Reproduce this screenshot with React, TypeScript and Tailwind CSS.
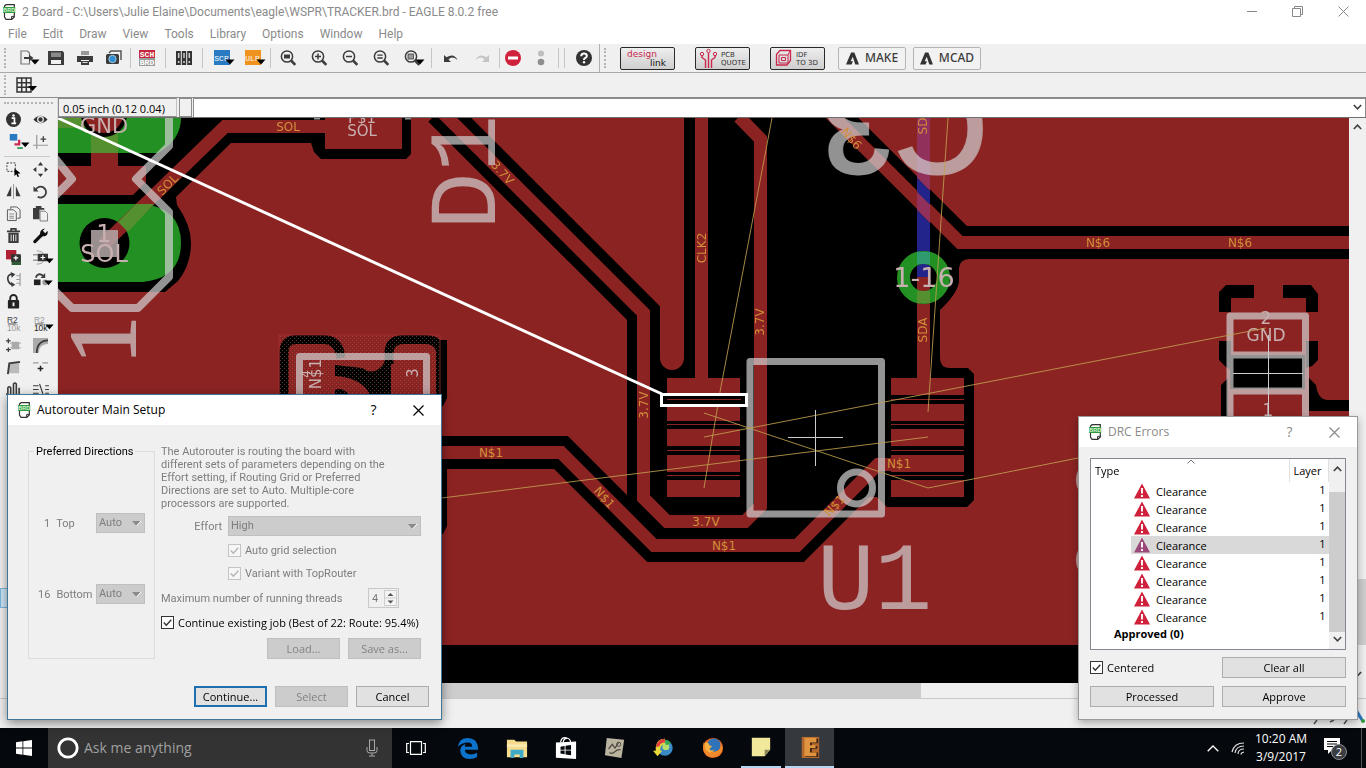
import React, { useState } from 'react';

type IconProps = { children: React.ReactNode; size?: number };

const Glyph = ({ children, size = 16 }: IconProps) => (
  <svg width={size} height={size} viewBox="0 0 16 16" fill="none" className="block shrink-0">
    {children}
  </svg>
);

const DARK = '#3c3c3c';
const GRAY = '#9a9a9a';

const BoardIcon = () => (
  <svg width="13" height="16" viewBox="0 0 13 16" className="block shrink-0">
    <path d="M3 .7h8.300v12.300l-2.500 2.300H3L1.500 13V2z" fill="#fff" stroke="#333" strokeWidth="1.200" />
    <rect x=".2" y="3" width="12" height="6" fill="#2f9a3c" />
    <text x="6.200" y="8.200" fontSize="5.500" fontWeight="700" textAnchor="middle" fill="#d8f5d8" fontFamily="Liberation Sans, sans-serif">BRD</text>
    <path d="M8.600 15v-2.600h2.700" fill="none" stroke="#333" />
  </svg>
);

const Lens = ({ children }: { children: React.ReactNode }) => (
  <>
    <circle cx="7" cy="6.500" r="5.600" stroke={DARK} strokeWidth="1.500" />
    <path d="M11 10.500l4.300 4.300" stroke={DARK} strokeWidth="2.600" />
    {children}
  </>
);

const toolbarIcons: Record<string, React.ReactNode> = {
  open: (
    <>
      <path d="M10.500 5V3L8.500 1H2v13h8.500v-3" stroke="#777" strokeWidth="1.200" />
      <path d="M5 7h5V4.500L14.500 8 10 11.500V9H5z" fill={DARK} />
    </>
  ),
  save: (
    <>
      <path d="M0 1h14.500L16 2.500V15H0z" fill={DARK} />
      <rect x="3" y="2.500" width="10" height="4.500" fill="#8a8a8a" />
      <rect x="3" y="10" width="10" height="4" fill="#f0f0f0" />
    </>
  ),
  print: (
    <>
      <rect x="4" y="1" width="8" height="4" fill={GRAY} />
      <path d="M0 6h16v6h-4v-2H4v2H0z" fill={DARK} />
      <path d="M4 11h8v4H4z" fill={DARK} />
      <path d="M5.500 12.500h5" stroke="#ddd" />
    </>
  ),
  camera: (
    <>
      <path d="M3 3l2-2h10v9" stroke="#555" strokeWidth="1.500" />
      <rect x="0" y="4" width="13" height="10" rx="1.500" fill={DARK} />
      <circle cx="6.500" cy="9" r="3.700" fill="#2f8fd0" stroke="#cfe6f7" strokeWidth=".7" />
    </>
  ),
  sch: (
    <>
      <rect x="0" y="0" width="16" height="8" fill="#c4283c" />
      <rect x="0" y="8" width="16" height="8" fill="#9c9c9c" />
      <text x="8" y="6.900" fontSize="8" fontWeight="700" fill="#fff" textAnchor="middle" fontFamily="Liberation Mono, monospace">SCH</text>
      <text x="8" y="14.800" fontSize="8" fontWeight="700" fill="#fff" textAnchor="middle" fontFamily="Liberation Mono, monospace">BRD</text>
    </>
  ),
  library: (
    <>
      <rect x="0" y="1" width="16" height="14" fill="#333" />
      <path d="M5.300 1v14M10.700 1v14" stroke="#f0f0f0" />
      <path d="M2.700 3v5M8 3v5M13.300 3v5M2.700 11v2M8 11v2M13.300 11v2" stroke="#ccc" strokeWidth="1.500" />
    </>
  ),
  scr: (
    <>
      <rect x="0" y="0" width="16" height="15" fill="#2a7ac2" />
      <text x="7.500" y="10.500" fontSize="8" fill="#fff" textAnchor="middle" fontFamily="Liberation Mono, monospace">SCR</text>
    </>
  ),
  ulp: (
    <>
      <rect x="0" y="0" width="16" height="15" fill="#f0921e" />
      <text x="7.500" y="10.500" fontSize="8" fill="#fff" textAnchor="middle" fontFamily="Liberation Mono, monospace">ULP</text>
    </>
  ),
  zoomFit: <Lens><rect x="4" y="4.500" width="6" height="4" fill={DARK} /></Lens>,
  zoomIn: <Lens><path d="M4 6.500h6M7 3.500v6" stroke={DARK} strokeWidth="1.500" /></Lens>,
  zoomOut: <Lens><path d="M4 6.500h6" stroke={DARK} strokeWidth="1.500" /></Lens>,
  zoomRedraw: <Lens><path d="M4.300 5.200h5.400M4.300 8h5.400" stroke={DARK} strokeWidth="1.300" /></Lens>,
  zoomSelect: <Lens><rect x="4" y="4" width="5.500" height="5" fill={GRAY} stroke={DARK} strokeWidth=".8" /></Lens>,
  undo: <path d="M1 5v7h7L5.500 9.500Q9 5.500 14.500 10 11 2.500 3.500 7.300z" fill={DARK} />,
  redo: <path d="M15 5v7H8l2.500-2.500Q7 5.500 1.500 10 5 2.500 12.500 7.300z" fill="#c4c4c4" />,
  stop: (
    <>
      <circle cx="8" cy="8" r="8" fill="#d0213c" />
      <rect x="3" y="6.500" width="10" height="3" fill="#fff" />
    </>
  ),
  go: (
    <>
      <circle cx="8" cy="3.500" r="3" fill="#bdbdbd" />
      <circle cx="8" cy="12" r="3.300" fill="#8e8e8e" />
    </>
  ),
  help: (
    <>
      <circle cx="8" cy="8" r="8" fill="#333" />
      <path d="M5.200 6.200Q5.300 3.600 8 3.600t2.800 2.300Q10.800 7.300 9 8.200 8 8.800 8 10" stroke="#fff" strokeWidth="2" />
      <circle cx="8" cy="12.300" r="1.200" fill="#fff" />
    </>
  ),
};

type Tool = { id: string; label: string; drop?: boolean };

const ToolButton = ({ id, label, drop, width = 'w-[31px]' }: Tool & { width?: string }) => (
  <button type="button" aria-label={label} title={label} className={`flex h-6 ${width} items-center justify-center`}>
    <svg width="16" height="16" viewBox="0 0 16 16" fill="none" className="overflow-visible">
      {toolbarIcons[id]}
      {drop && <path d="M11.500 9.500h9l-4.500 5z" fill="#000" />}
    </svg>
  </button>
);

const Sep = ({ wide = false }) => (
  <span className={`flex h-5 shrink-0 justify-center ${wide ? 'w-2' : 'w-1'}`}>
    <span className="w-px bg-[#c6c6c6]" />
  </span>
);

const Grip = () => <span className="ml-1 h-5 w-2 shrink-0 border-l-2 border-dotted border-[#b4b4b4]" />;

const paletteIcons: [string, React.ReactNode][] = [
  ['Info', <><circle cx="8" cy="8" r="8" fill="#333" /><path d="M6 6.500h3V12M5.800 12.200h5" stroke="#fff" strokeWidth="1.800" /><circle cx="8" cy="3.800" r="1.300" fill="#fff" /></>],
  ['Show', <><path d="M.5 8Q8 0 15.500 8 8 16 .5 8z" fill="#333" /><circle cx="8" cy="8" r="3" fill="#333" stroke="#f0f0f0" strokeWidth="1.300" /></>],
  ['Layer settings', <><rect x="4" y="0" width="8" height="7" fill="#2a7ac2" /><path d="M14 6v5H9" stroke="#cc2850" strokeWidth="2.500" /><path d="M12 15h6" stroke="#39a060" strokeWidth="2" /><path d="M16 9h9l-4.500 5z" fill="#000" /></>],
  ['Mark', <><path d="M4 1v15M0 12h16" stroke={GRAY} strokeWidth="1.300" /><path d="M8 5.500h6M11 2.500v6" stroke="#444" strokeWidth="1.500" /></>],
  ['Group', <><rect x="1" y="1" width="9" height="9" stroke="#333" strokeDasharray="2 1.500" /><path d="M9 7l6.500 5-3 .5 1.500 3-1.500.5-1.500-3-2 2z" fill="#000" /></>],
  ['Move', <path d="M8 0l2.800 3.600H5.200zM8 16l2.800-3.600H5.200zM0 8l3.600-2.800v5.600zM16 8l-3.600-2.800v5.600z" fill="#333" />],
  ['Mirror', <><path d="M5.500 2v11H.5z" fill={DARK} /><path d="M10.500 2v11h5z" fill={DARK} /><path d="M8 0v16" stroke={GRAY} /></>],
  ['Rotate', <><path d="M3 6A5.800 5.800 0 1 1 5 13.500" stroke={DARK} strokeWidth="1.900" /><path d="M.5 2.500v5.500h5.500z" fill={DARK} /></>],
  ['Copy', <><path d="M5 3V1h6.500L15 4v9h-3" stroke="#555" /><path d="M1.500 4H8l3 3v8.500H1.500z" stroke="#555" fill="#f0f0f0" /><path d="M3.500 8.500h5M3.500 11h5M3.500 13h5" stroke="#888" /></>],
  ['Paste', <><path d="M0 2h3V0h6v2h3v2H7v10H0z" fill={DARK} /><path d="M7.500 5.500H13l2.500 2.500v8h-8z" fill="#f0f0f0" stroke="#777" /></>],
  ['Delete', <><path d="M1 3.500h14M5.500 3V1h5v2" stroke={DARK} strokeWidth="1.800" /><path d="M2.500 5h11v11h-11z" fill={DARK} /><path d="M5.500 7v7M8 7v7M10.500 7v7" stroke="#eee" /></>],
  ['Properties', <><path d="M2 14.500L9 7.500" stroke="#111" strokeWidth="3.500" strokeLinecap="round" /><path d="M13 .5L10.500 3l2.500 2.500L15.500 3q1 4.500-3 5.800-4.500.7-5-3.300Q8 1 13 .5z" fill="#111" /></>],
  ['Add part', <><rect x="0" y="0" width="11" height="10" fill="#b02035" /><rect x="6" y="5" width="10" height="11" fill="#2f5a35" /><rect x="5.500" y="4.500" width="10" height="8" fill="#333" /><path d="M8 8.500h5M10.500 6v5" stroke="#fff" strokeWidth="1.300" /></>],
  ['Replace', <><path d="M0 5h5M0 11h5" stroke={GRAY} strokeWidth="1.500" /><path d="M4 1q6 0 7 3v8q-1 3-7 3" stroke={GRAY} /><rect x="5" y="4" width="11" height="8" fill="#333" /><path d="M8 8h5M10.500 5.500v5" stroke="#fff" strokeWidth="1.300" /><path d="M13 9h9l-4.500 5z" fill="#000" /></>],
  ['Pin swap', <><path d="M7 2Q1 3 2 8t5 5.500" stroke={DARK} strokeWidth="1.800" /><path d="M5 0l5 2.500L6 6zM5 10.500l5 3L6 16z" fill={DARK} /><path d="M15 1v14M11 4h4M11 8h4M11 12h4" stroke={GRAY} strokeWidth="1.200" /></>],
  ['Gate swap', <><path d="M3 6Q5 0 11 4" stroke={DARK} strokeWidth="2" /><path d="M13 1v5.500H8z" fill={DARK} /><rect x="1" y="8" width="7" height="6" fill="#222" /><circle cx="13" cy="11" r="3" fill={GRAY} /><path d="M12 9h9l-4.500 5z" fill="#000" /></>],
  ['Lock', <><path d="M4.500 7V4.500a3.500 3.500 0 0 1 7 0V7" stroke="#222" strokeWidth="2" /><rect x="2" y="6.500" width="12" height="9" rx="1" fill="#222" /><path d="M8 9v4" stroke="#f0f0f0" strokeWidth="2" /></>],
  ['', null],
  ['Name', <><text x="1" y="7" fontSize="9" fill="#444" fontFamily="Liberation Sans, sans-serif">R2</text><path d="M2 8.500h9" stroke="#444" /><text x="1" y="16" fontSize="9" fill="#999" fontFamily="Liberation Sans, sans-serif">10k</text></>],
  ['Value', <><text x="1" y="7" fontSize="9" fill="#999" fontFamily="Liberation Sans, sans-serif">R2</text><path d="M2 8.500h9" stroke="#444" /><text x="1" y="16" fontSize="9" fill="#222" fontFamily="Liberation Sans, sans-serif">10k</text><path d="M13 9h9l-4.500 5z" fill="#000" /></>],
  ['Smash', <><path d="M0 3h5M2.500.5v5M0 12.500h5M2.500 10v5" stroke={DARK} strokeWidth="1.300" /><rect x="6" y="4" width="8" height="8" fill="#aaa" /><path d="M4 5.500h12M4 10.500h12" stroke="#aaa" /></>],
  ['Miter', <><path d="M0 0h16v6Q6 7 6 16H0z" fill="#aaa" /><path d="M4 16Q4 3 16 2.500" stroke={DARK} strokeWidth="1.800" /></>],
  ['Split', <><path d="M3.500 3.500L14 2v12H3z" fill="#bbb" /><path d="M2 15L3.500 3.500 15 2" stroke={DARK} strokeWidth="2" /></>],
  ['Optimize', <><path d="M0 3h6M10 3h6" stroke={GRAY} strokeWidth="1.300" /><path d="M5 9h6M8 6v6" stroke="#222" strokeWidth="1.600" /></>],
  ['Meander', <path d="M0 13h2V6q1.500-2 3 0v8q1.500 2 3 0V2q1.500-2 3 0v12M14 14V6" stroke={DARK} strokeWidth="1.700" />],
  ['Route', <path d="M0 4h6M0 8h6M0 12h6M7 2l4 12M13 4h4M13 8h4M13 12h4" stroke={DARK} strokeWidth="1.300" />],
];

const Palette = () => (
  <nav aria-label="Tools" className="flex w-[58px] shrink-0 flex-col overflow-hidden border-r border-[#dcdcdc] bg-[#f0f0f0] pt-1">
    <span className="mx-1 h-[6px] shrink-0 border-t-2 border-dotted border-[#b4b4b4]" />
    <div className="grid auto-rows-[22px] grid-cols-[26px_28px]">
      {paletteIcons.map(([label, icon], i) => (
        <React.Fragment key={i}>
          {i === 4 && <span className="col-span-2 mx-1 mt-1 h-[5px] self-start border-t border-[#c8c8c8]" />}
          {label ? (
            <button type="button" aria-label={label} title={label} className={`flex h-[22px] items-center justify-center ${i >= 4 ? '-mt-4' : ''}`}>
              <svg width="15" height="15" viewBox="0 0 16 16" fill="none" className="overflow-visible">{icon}</svg>
            </button>
          ) : (
            <span />
          )}
        </React.Fragment>
      ))}
    </div>
    <div className="mt-auto mb-[90px] h-5 shrink-0 border border-[#7ab6dc] bg-[#cde6f7]" />
  </nav>
);

const AIR = '#c0a050';

type NetLabel = [string, number, number, number];

const netLabels: NetLabel[] = [
  ['SOL', 288, 126, 0],
  ['SOL', 167, 184, -45],
  ['3.7V', 503, 172, 48],
  ['CLK2', 701, 248, -90],
  ['3.7V', 759, 322, -90],
  ['3.7V', 643, 405, -90],
  ['3.7V', 706, 521, 0],
  ['N$1', 491, 452, 0],
  ['N$1', 605, 497, 48],
  ['N$1', 724, 545, 0],
  ['N$1', 834, 505, -48],
  ['N$1', 899, 463, 0],
  ['N$6', 852, 138, 48],
  ['N$6', 1098, 242, 0],
  ['N$6', 1240, 242, 0],
  ['SDA', 922, 330, -90],
  ['SDA', 922, 122, -90],
];

const padRows = [404, 429, 455, 480];

const PadColumn = ({ x }: { x: number }) => (
  <g fill="#8c2323">
    <rect x={x} y="378" width="73" height="17" />
    {padRows.map((y) => (
      <React.Fragment key={y}>
        <rect x={x} y={y - 5} width="73" height="1" />
        <rect x={x} y={y} width="73" height="17" />
      </React.Fragment>
    ))}
  </g>
);

const Board = () => (
  <svg viewBox="58 118 1291 565" preserveAspectRatio="xMinYMin slice" className="block h-full w-full bg-black">
    <defs>
      <pattern id="dots" width="4" height="4" patternUnits="userSpaceOnUse">
        <rect x="0" y="0" width="1" height="1" fill="#c05050" opacity=".6" />
        <rect x="2" y="2" width="1" height="1" fill="#6b7040" opacity=".6" />
      </pattern>
    </defs>
    <rect x="58" y="118" width="1291" height="527" fill="#8c2323" />

    {/* isolation around the connector, pads and traces */}
    <path d="M58 118H231V143L176 197L177 205Q191 225 191 243Q191 265 178 281L165 292H58Z" fill="#000" />
    <path d="M308 118H411V154L406 159H321L314 152L311 143H231V118Z" fill="#000" />
    <path d="M684 118V358A12 12 0 0 1 660 358H650V500L670 532H805L869 497H877L887 507H967L974 500V374L968 368H950Q940 368 940 358V310Q957 294 959 282V268Q960 259 970 259L975 226H966L858 118Z" fill="#000" />
    <g fill="none" stroke="#000" strokeWidth="33">
      <path d="M440 110L643.500 313V498L667 521.500H745" />
      <path d="M440 452.500H561L654 545.500H797L878 464.500H900" />
      <path d="M827 110L960 242.500H1349" />
    </g>
    <path d="M436 340H447V398L443 406H436ZM436 468H447V526L443 534H436Z" fill="#000" />

    {/* connector copper */}
    <path d="M58 166H146V182L133 195H58Z" fill="#8c2323" />
    <path d="M58 118H181Q181 140 158 153H58Z" fill="#239023" />
    <rect x="58" y="118" width="33" height="10" fill="#559030" />
    <path d="M58 204H143Q181 208 181 243T143 282H58Z" fill="#239023" />
    <rect x="91" y="153" width="27" height="14" fill="#8c2323" />
    <rect x="91" y="134" width="27" height="19" fill="#559030" />
    <circle cx="104" cy="114" r="23" fill="#000" />
    <circle cx="104" cy="114" r="19" fill="#8c2323" />
    <circle cx="104.500" cy="243" r="25" fill="#000" />

    {/* copper traces */}
    <g fill="none" stroke="#8c2323" strokeWidth="13">
      <path d="M104 244L225 126.500H330" />
      <path d="M440 110L643.500 313V498L667 521.500H745L760.500 506V139L739 117" />
      <path d="M440 452.500H561L654 545.500H797L878 464.500H900" />
      <path d="M827 110L960 242.500H1349" />
      <path d="M701.500 118V380M923.500 272V380" />
    </g>
    <path d="M136 204H154L128 232L118 222Z" fill="#559030" />
    <rect x="91" y="230" width="27" height="27" fill="#b4a8a8" opacity=".85" />
    <rect x="325" y="118" width="77" height="31" fill="#8c2323" />
    <PadColumn x={667} />
    <PadColumn x={891} />
    <path d="M917 118h13v73l-13-13z" fill="#92305c" />
    <path d="M917 178l13 13v14l-13-13zM917 210l13 13v54h-13z" fill="#23238c" />
    <path d="M917 192l13 13v18l-13-13z" fill="#92305c" />
    <circle cx="923.500" cy="277.500" r="20" fill="none" stroke="#239023" strokeWidth="13" />
    <path d="M917 252h13v12h-13z" fill="#2f9a70" />
    <path d="M917 291h13v12h-13z" fill="#559030" />

    {/* lower left package */}
    <g fill="none" stroke="#000" strokeWidth="9">
      <path d="M284 400V352Q284 339.500 297 339.500H324Q339 340 341 358" />
      <path d="M389 364V352Q390 339.500 404 339.500H426Q441 340 441 356V400" />
    </g>
    <path d="M335 365L362 368Q373 376 382 366L391 352V400H372Q366 378 335 376ZM335 390Q345 386 352 400H335Z" fill="#000" />
    <rect x="279" y="335" width="161" height="60" fill="url(#dots)" stroke="#a83838" strokeWidth=".7" />

    {/* C3 isolation */}
    <path d="M1219 312V292L1226 285H1254V298H1231V312ZM1283 285H1311L1318 294V312H1306V298H1283Z" fill="#000" />
    <path d="M1219 341H1231V370L1226 367L1219 360ZM1306 341H1318V360L1312 366L1306 368ZM1221 385L1228 378V420H1221ZM1309 378L1316 385Q1318 400 1328 400H1349V411H1309Z" fill="#000" />
    <rect x="1230" y="355" width="75" height="34" fill="#000" />

    {/* silkscreen */}
    <g opacity=".7" fill="none" stroke="#d2d2d2" strokeWidth="7" strokeLinejoin="round">
      <path d="M169 110V146L136 179L169 212V277L138 308H72L50 286M50 152L72 179L50 201" strokeWidth="8" />
      <path d="M750 361.500H881.500V514H750Z" />
      <circle cx="856.500" cy="488" r="16" />
      <path d="M299.500 400V356.500H426.500V400" />
      <path d="M1230 425V316H1305.500V425M1230 355H1305M1230 391H1305" />
      <circle cx="1098" cy="480" r="20" strokeWidth="4" />
      <circle cx="1098" cy="560" r="20" strokeWidth="4" />
      <path d="M314 118h6M405 118h6" strokeWidth="3" />
    </g>
    <g opacity=".7" fill="#d2d2d2" fontFamily="Liberation Mono, monospace" fontSize="96">
      <text x="817" y="609">U1</text>
      <text transform="translate(495 230) rotate(-90)">D1</text>
      <text transform="translate(988 83) rotate(180)" fontFamily="Liberation Sans, sans-serif" fontSize="130" stroke="#d2d2d2" strokeWidth="3">C3</text>
      <text transform="translate(135 364) rotate(-90)" fontFamily="Liberation Serif, serif" fontSize="96" stroke="#d2d2d2" strokeWidth="2">1</text>
    </g>

    {/* pad names */}
    <g fill="#c9b0b0" fontFamily="DejaVu Sans, sans-serif" textAnchor="middle" fontSize="24">
      <text x="104" y="133" fontSize="21">GND</text>
      <text x="104" y="242">1</text>
      <text x="104" y="262">SOL</text>
      <text x="924" y="287" fontSize="27">1-16</text>
      <text x="362" y="136" fontSize="15">SOL</text>
      <text x="362" y="123" fontSize="15">P$1</text>
      <text x="1266" y="341" fontSize="17">GND</text>
      <text x="1266" y="324" fontSize="17">2</text>
      <text x="1268" y="416" fontSize="17">1</text>
      <text transform="translate(321 374) rotate(-90)" fontSize="15">N$1</text>
      <text transform="translate(310 374) rotate(-90)" fontSize="12">4</text>
      <text transform="translate(418 373) rotate(-90)" fontSize="15">3</text>
    </g>
    <g fill="#d08f38" fontFamily="DejaVu Sans, sans-serif" textAnchor="middle" fontSize="12">
      {netLabels.map(([name, x, y, angle], i) => (
        <text key={i} transform={`translate(${x} ${y}) rotate(${angle})`} dy="5">{name}</text>
      ))}
    </g>

    {/* airwires */}
    <g fill="none" stroke={AIR} strokeWidth="1" opacity=".85">
      <path d="M772 118L720 392L704 488" />
      <path d="M948 118L928 412" />
      <path d="M704 437L1266 328" />
      <path d="M704 413L928 488L1078 458" />
      <path d="M442 498L928 437" />
    </g>
    <path d="M788 437.500H843M815.500 410V466M1233 373.500H1303M1268.500 335V420" stroke="#ccc" strokeWidth="1" />

    {/* selected DRC error */}
    <path d="M58 118L662 394" stroke="#fff" strokeWidth="3" />
    <rect x="661.500" y="394.500" width="85" height="11" fill="#000" stroke="#fff" strokeWidth="3" />
    <path d="M667 399.500H741" stroke="#8c2323" strokeWidth="1" />
  </svg>
);

const Chevron = ({ up = false }) => (
  <svg width="9" height="6" viewBox="0 0 9 6" fill="none" className={up ? '' : 'rotate-180'}>
    <path d="M.8 5L4.500 1.200 8.200 5" stroke="#404040" strokeWidth="1.600" />
  </svg>
);

type CheckProps = { id: string; label: string; defaultChecked?: boolean; disabled?: boolean };

const Check = ({ id, label, defaultChecked, disabled }: CheckProps) => {
  const [checked, setChecked] = useState(!!defaultChecked);
  return (
    <div className="flex items-center gap-1">
      <span className="relative h-[13px] w-[13px] shrink-0">
        <input
          id={id}
          type="checkbox"
          checked={checked}
          disabled={disabled}
          onChange={() => setChecked(!checked)}
          className="block h-[13px] w-[13px] appearance-none border border-[#333] bg-white disabled:border-[#c4c4c4] disabled:bg-[#f6f6f6]"
        />
        {checked && (
          <svg viewBox="0 0 13 13" fill="none" className="pointer-events-none absolute inset-0">
            <path d="M2.800 6.500L5.300 9.200 10.300 3.700" stroke={disabled ? '#b4b4b4' : '#333'} strokeWidth="1.400" />
          </svg>
        )}
      </span>
      <label htmlFor={id} className={disabled ? 'text-[#7d7d7d]' : "font-['Open_Sans',sans-serif] text-black"}>{label}</label>
    </div>
  );
};

const SelectBox = ({ id, value, className }: { id: string; value: string; className: string }) => (
  <span className={`relative ${className}`}>
    <select id={id} disabled className="block h-5 w-full appearance-none border border-[#bfbfbf] bg-[#cccccc] px-[2px] text-[11px] leading-4 text-[#7d7d7d] opacity-100">
      <option>{value}</option>
    </select>
    <svg width="9" height="5" viewBox="0 0 9 5" className="pointer-events-none absolute top-2 right-1">
      <path d="M0 0h9L4.500 5z" fill="#8a8a8a" />
      <path d="M9 0L4.500 5" stroke="#fff" />
    </svg>
  </span>
);

const buttonBase = "h-[21px] border font-['Open_Sans',sans-serif] text-[11px] leading-4";
const buttonNormal = 'border-[#adadad] bg-[#e1e1e1] text-black';
const buttonDisabled = 'border-[#bfbfbf] bg-[#cccccc] text-[#838383]';

const TitleBar = ({ title, active }: { title: string; active?: boolean }) => (
  <header className={`flex h-[30px] items-center bg-white pl-[10px] font-['Open_Sans',sans-serif] text-xs ${active ? 'text-black' : 'text-[#8a8a8a]'}`}>
    <BoardIcon />
    <h2 className="ml-[6px] flex-1">{title}</h2>
    <button type="button" aria-label="Help" className="w-[45px] text-sm">?</button>
    <button type="button" aria-label="Close" className="flex w-[45px] justify-center">
      <svg width="11" height="11" viewBox="0 0 11 11" fill="none">
        <path d="M.5.5l10 10M10.500.5l-10 10" stroke="currentColor" strokeWidth="1.200" />
      </svg>
    </button>
  </header>
);

const AutorouterDialog = () => (
  <section className="absolute bottom-[48px] left-[7px] flex h-[326px] w-[435px] flex-col border border-[#3f7596] bg-[#f0f0f0] font-['Roboto',sans-serif] text-[11px] leading-[13px] shadow-[0_3px_10px_rgba(0,0,0,0.45)]">
    <TitleBar title="Autorouter Main Setup" active />
    <div className="flex flex-1 pt-5 pl-5">
      <fieldset className="flex h-[214px] w-[127px] flex-col border border-[#dcdcdc] text-[#7d7d7d]">
        <legend className="ml-[5px] px-[2px] text-black">Preferred Directions</legend>
        <div className="mt-[55px] flex items-center">
          <label htmlFor="dir1" className="flex flex-1 gap-[6px] pl-[15px]"><span>1</span>Top</label>
          <SelectBox id="dir1" value="Auto" className="mr-[9px] w-[49px]" />
        </div>
        <div className="mt-[51px] flex items-center">
          <label htmlFor="dir16" className="flex flex-1 gap-[6px] pl-[9px]"><span>16</span>Bottom</label>
          <SelectBox id="dir16" value="Auto" className="mr-[9px] w-[49px]" />
        </div>
      </fieldset>
      <div className="ml-[6px] w-[260px] text-[#7d7d7d]">
        <p className="whitespace-nowrap">
          The Autorouter is routing the board with<br />
          different sets of parameters depending on the<br />
          Effort setting, if Routing Grid or Preferred<br />
          Directions are set to Auto. Multiple-core<br />
          processors are supported.
        </p>
        <div className="mt-[6px] flex items-center justify-end gap-[6px]">
          <label htmlFor="effort">Effort</label>
          <SelectBox id="effort" value="High" className="w-[193px]" />
        </div>
        <div className="mt-2 flex flex-col gap-[10px] pl-[67px]">
          <Check id="autogrid" label="Auto grid selection" defaultChecked disabled />
          <Check id="toprouter" label="Variant with TopRouter" defaultChecked disabled />
        </div>
        <div className="mt-2 flex items-center justify-between pr-[22px]">
          <label htmlFor="threads" className="whitespace-nowrap">Maximum number of running threads</label>
          <span className="relative">
            <input id="threads" type="text" defaultValue="4" disabled className="block h-5 w-[31px] border border-[#c8c8c8] bg-[#f0f0f0] pl-[3px] text-[11px]" />
            <svg width="13" height="16" viewBox="0 0 13 16" className="absolute top-[2px] right-[2px]">
              <rect x=".5" y=".5" width="12" height="15" fill="#f4f4f4" stroke="#ccc" />
              <path d="M.5 8h12" stroke="#ccc" />
              <path d="M3.500 6L6.500 3 9.500 6zM3.500 10.500L6.500 13.500 9.500 10.500z" fill="#555" />
            </svg>
          </span>
        </div>
        <div className="mt-2 whitespace-nowrap">
          <Check id="continue" label="Continue existing job (Best of 22: Route: 95.4%)" defaultChecked />
        </div>
        <div className="mt-[9px] flex justify-end gap-2">
          <button type="button" disabled className={`${buttonBase} ${buttonDisabled} w-[73px]`}>Load...</button>
          <button type="button" disabled className={`${buttonBase} ${buttonDisabled} w-[73px]`}>Save as...</button>
        </div>
      </div>
    </div>
    <div className="flex justify-end gap-2 pr-3 pb-3">
      <button type="button" className={`${buttonBase} w-[73px] border-2 border-[#1c6fb0] bg-[#e1e1e1] text-black`}>Continue...</button>
      <button type="button" disabled className={`${buttonBase} ${buttonDisabled} w-[73px]`}>Select</button>
      <button type="button" className={`${buttonBase} ${buttonNormal} w-[73px]`}>Cancel</button>
    </div>
  </section>
);

const errors = [false, false, false, true, false, false, false, false];

const DrcDialog = () => (
  <section className="absolute right-2 bottom-[48px] flex h-[304px] w-[280px] flex-col border border-[#9a9a9a] bg-[#f0f0f0] font-['Open_Sans',sans-serif] text-[11px] leading-[13px] shadow-[0_3px_8px_rgba(0,0,0,0.3)]">
    <TitleBar title="DRC Errors" />
    <div className="flex flex-1 flex-col px-[11px] pt-[11px]">
      <div className="flex h-[192px] border border-[#828790] bg-white">
        <table className="w-[238px] table-fixed self-start text-black">
          <thead>
            <tr className="h-[23px]">
              <th scope="col" className="w-[198px] border-r border-[#e0e0e0] pl-1 text-left font-normal">
                <span className="relative block">
                  Type
                  <svg width="8" height="5" viewBox="0 0 8 5" fill="none" className="absolute -top-[5px] left-[92px]">
                    <path d="M.5 4.500L4 1l3.500 3.500" stroke="#777" />
                  </svg>
                </span>
              </th>
              <th scope="col" className="border-r border-[#e0e0e0] pl-1 text-left font-normal">Layer</th>
            </tr>
          </thead>
          <tbody>
            {errors.map((selected, i) => (
              <tr key={i} className="h-[18px]">
                <td className="p-0 pl-10">
                  <span className={`flex h-[18px] items-center gap-[6px] pl-[3px] ${selected ? 'bg-[#d9d9d9]' : ''}`}>
                    <Glyph>
                      <path d="M8 0.500L16 15.500H0z" fill={selected ? '#9c4878' : '#d0213c'} />
                      <path d="M8 5v5.500M8 12v2" stroke="#fff" strokeWidth="1.900" />
                    </Glyph>
                    Clearance
                  </span>
                </td>
                <td className={`p-0 pr-[3px] pb-1 text-right ${selected ? 'bg-[#d9d9d9]' : ''}`}>1</td>
              </tr>
            ))}
            <tr>
              <td colSpan={2} className="p-0 pt-px pl-[23px] font-bold">Approved (0)</td>
            </tr>
          </tbody>
        </table>
        <div className="flex flex-1 flex-col items-center justify-between bg-[#f0f0f0] py-[7px]">
          <Chevron up />
          <span className="mt-[20px] mb-1 w-full flex-1 bg-[#cdcdcd]" />
          <Chevron />
        </div>
      </div>
      <div className="mt-[7px] grid grid-cols-2 items-center gap-2">
        <Check id="centered" label="Centered" defaultChecked />
        <button type="button" className={`${buttonBase} ${buttonNormal}`}>Clear all</button>
        <button type="button" className={`${buttonBase} ${buttonNormal}`}>Processed</button>
        <button type="button" className={`${buttonBase} ${buttonNormal}`}>Approve</button>
      </div>
    </div>
  </section>
);

const menus = ['File', 'Edit', 'Draw', 'View', 'Tools', 'Library', 'Options', 'Window', 'Help'];

const linkButton = 'flex h-[23px] w-[55px] items-center justify-center rounded-xs border border-[#2a2a2a] bg-gradient-to-b from-[#eeeeee] to-[#cfcfcf]';
const adskButton = "flex h-[23px] w-[68px] items-center justify-center gap-[6px] rounded-xs border border-[#b4b4b4] bg-[#f2f2f2] font-['Noto_Sans',sans-serif] text-xs font-medium text-[#3c3c3c]";

const Autodesk = () => (
  <svg width="13" height="13" viewBox="0 0 14 13" className="shrink-0">
    <path d="M0 13L5.500 0H9l5 13h-4L7.300 4.500 5 9.500h2.500L6 13z" fill="#333" />
  </svg>
);

const Toolbar = () => (
  <div className="flex h-[29px] items-center border-b border-[#a8a8a8] bg-[#f0f0f0]">
    <Grip />
    <ToolButton id="open" label="Open" drop width="w-[29px]" />
    <ToolButton id="save" label="Save" width="w-[29px]" />
    <ToolButton id="print" label="Print" width="w-[29px]" />
    <ToolButton id="camera" label="Export image" width="w-[29px]" />
    <Sep />
    <ToolButton id="sch" label="Switch to schematic" width="w-[29px]" />
    <Sep wide />
    <ToolButton id="library" label="Use library" width="w-[29px]" />
    <Sep wide />
    <ToolButton id="scr" label="Run script" drop />
    <ToolButton id="ulp" label="Run ULP" drop />
    <Sep />
    <ToolButton id="zoomFit" label="Zoom to fit" />
    <ToolButton id="zoomIn" label="Zoom in" />
    <ToolButton id="zoomOut" label="Zoom out" />
    <ToolButton id="zoomRedraw" label="Redraw" />
    <ToolButton id="zoomSelect" label="Zoom select" drop />
    <Sep wide />
    <ToolButton id="undo" label="Undo" />
    <ToolButton id="redo" label="Redo" />
    <Sep />
    <ToolButton id="stop" label="Cancel" width="w-6" />
    <ToolButton id="go" label="Go" />
    <Sep />
    <Sep wide />
    <ToolButton id="help" label="Help" />
    <span className="h-full w-px bg-[#b0b0b0]" />
    <Grip />
    <div className="ml-2 flex gap-5">
      <button type="button" aria-label="design link" className={linkButton}>
        <svg width="44" height="18" viewBox="0 0 44 18" fontFamily="DejaVu Sans, sans-serif" fontSize="9">
          <text x="1" y="8" fill="#c8284c">design</text>
          <text x="24" y="17" fill="#111">link</text>
        </svg>
      </button>
      <button type="button" aria-label="PCB quote" className={linkButton}>
        <svg width="48" height="20" viewBox="0 0 48 20" fill="none">
          <path d="M6.500 20V12L3 9.500V7M9.500 20V5M12.500 20V12L16 9.500V7" stroke="#c8284c" strokeWidth="1.400" />
          <circle cx="3" cy="6" r="1.700" stroke="#c8284c" />
          <circle cx="9.500" cy="3" r="1.700" stroke="#c8284c" />
          <circle cx="16" cy="6" r="1.700" stroke="#c8284c" />
          <text x="22" y="9" fontSize="7" fill="#333" fontFamily="DejaVu Sans, sans-serif">PCB</text>
          <text x="22" y="17" fontSize="7" fill="#333" fontFamily="DejaVu Sans, sans-serif">QUOTE</text>
        </svg>
      </button>
      <button type="button" aria-label="IDF to 3D" className={linkButton}>
        <svg width="46" height="18" viewBox="0 0 46 18" fill="none">
          <path d="M1.500 5.500L5 1.500h10.500v10L12 16H1.500z" stroke="#c8284c" strokeWidth="1.300" />
          <path d="M4 6h9v8H4zM6.500 8.500h4v3h-4zM13 6l2-4" stroke="#c8284c" />
          <text x="21" y="8" fontSize="7" fill="#333" fontFamily="DejaVu Sans, sans-serif">IDF</text>
          <text x="21" y="16" fontSize="7" fill="#333" fontFamily="DejaVu Sans, sans-serif">TO 3D</text>
        </svg>
      </button>
    </div>
    <div className="ml-[13px] flex gap-[7px]">
      <button type="button" className={adskButton}><Autodesk />MAKE</button>
      <button type="button" className={adskButton}><Autodesk />MCAD</button>
    </div>
  </div>
);

const taskbarApps: [string, React.ReactNode, string][] = [
  ['Edge', <path d="M1 11Q2 1 12 1q10 0 11 11v2H8.500q.5 5 6.500 5 4 0 7-1.800v4.500Q19 24 14 24 4 24 3.500 14.500 4 9 9.500 7.500 8.500 9 8.500 10.500h8Q16.500 6 12 6 5 6 1 11z" fill="#0c72cc" />, ''],
  ['File Explorer', <><path d="M1 3h8l2 2h12v17H1z" fill="#f4dc8c" /><path d="M1 8h22v3H1z" fill="#fbeab0" /><path d="M5 14h14v9h-4v-4H9v4H5z" fill="#3fa9c8" /></>, ''],
  ['Store', <><path d="M1 6l22-1v19L1 22.500z" fill="#fff" /><path d="M6 6Q7 0 12 0.800t5 5M9 6q0-4 4-4.500" stroke="#fff" strokeWidth="1.300" fill="none" /><path d="M6 10.500l4.500-.7v4H6zM11.500 9.600l6-.8v5h-6zM6 14.800h4.500v4l-4.500-.7zM11.500 14.800h6v5l-6-.8z" fill="#05080c" /></>, ''],
  ['EAGLE tools', <><path d="M3 1l19 2-3 20-18-3z" fill="#b9b3a0" /><path d="M5 13l4-5 3 4 4-6M6 17q3 2 6-1t6-2" stroke="#4a463c" fill="none" strokeWidth="1.300" /><circle cx="16" cy="8" r="2.300" fill="none" stroke="#4a463c" /></>, ''],
  ['Browser', <><circle cx="13" cy="12" r="8.500" fill="#3a8ac8" /><path d="M13 2Q4 2 3 11v4H0l5 6 5-6H8q-1-6 5-8z" fill="#e8d838" /><path d="M13 2Q5 2 3 11l4-1q1-4 6-4z" fill="#e0403c" /><circle cx="14" cy="10.500" r="3.800" fill="#b8e068" /><path d="M13 3a9 9 0 0 1 7 4l-6 2z" fill="#38a850" /></>, ''],
  ['Firefox', <><circle cx="12" cy="12" r="11" fill="#e8641c" /><circle cx="13" cy="9" r="7.500" fill="#2f74b8" /><path d="M2 5q0 8 5 10t10 0q4-2 3-9 4 6 1 11-5 6-12 5Q1 19 1 11z" fill="#f0882c" /><path d="M3 6q4-1 5 3l3 1-3 3q2 3 6 1-4 5-9 1-3-4-2-9z" fill="#f8b040" /></>, ''],
  ['Sticky Notes', <><path d="M2 2h20v13l-6 7H2z" fill="#f2e89c" /><path d="M22 15h-6v7z" fill="#8a8458" /></>, 'mx-1 w-10! border-b-2 border-[#b4d4f0]'],
  ['EAGLE', <><rect x="3" y="1" width="19" height="23" fill="#b4682c" /><path d="M7 3h14v5h-7v3h6v3h-6v4h7v5H7z" fill="#3c2414" /><path d="M6 2h13v5h-7v3h6v3h-6v5h7v4H6z" fill="#e09440" /></>, 'border-b-2 border-[#b4d4f0] bg-[#35383c]'],
];

const Taskbar = () => (
  <footer className="flex h-10 shrink-0 items-stretch bg-[#05080c] font-['Open_Sans',sans-serif] text-white">
    <button type="button" aria-label="Start" className="flex w-12 items-center justify-center">
      <svg width="16" height="16" viewBox="0 0 16 16" fill="#fff">
        <path d="M0 2.200L6.500 1.300V7.600H0zM7.300 1.200L16 0V7.600H7.300zM0 8.400H6.500V14.700L0 13.800zM7.300 8.400H16V16L7.300 14.800z" />
      </svg>
    </button>
    <div className="flex w-[344px] items-center bg-[#333333] pr-[14px] pl-[9px]">
      <svg width="22" height="22" viewBox="0 0 22 22" fill="none">
        <circle cx="11" cy="11" r="9.200" stroke="#fff" strokeWidth="2.800" />
      </svg>
      <input aria-label="Search" type="text" placeholder="Ask me anything" className="ml-[5px] min-w-0 flex-1 bg-transparent text-sm placeholder:text-[#a0a0a0]" />
      <svg width="12" height="18" viewBox="0 0 12 18" fill="none" stroke="#a8a8a8">
        <rect x="3.500" y="1" width="5" height="10.500" />
        <path d="M1 8v3.500Q1 14 4 14h4q3 0 3-2.500V8M6 14v3M3 17h6" />
      </svg>
    </div>
    <button type="button" aria-label="Task view" className="flex w-12 items-center justify-center">
      <svg width="20" height="14" viewBox="0 0 20 14" fill="none" stroke="#fff" strokeWidth="1.200">
        <path d="M4.500.6h11v12.800h-11zM3 2.500H.7v9H3M17 2.500h2.300v9H17" />
      </svg>
    </button>
    <div className="flex pl-[3px]">
      {taskbarApps.map(([label, icon, extra]) => (
        <button key={label} type="button" aria-label={label} className={`flex w-[49px] items-center justify-center ${extra}`}>
          <svg width="22" height="22" viewBox="0 0 24 24">{icon}</svg>
        </button>
      ))}
    </div>
    <div className="ml-auto flex items-center">
      <button type="button" aria-label="Show hidden icons" className="flex w-6 justify-center">
        <svg width="12" height="7" viewBox="0 0 12 7" fill="none"><path d="M.7 6.300L6 1l5.300 5.300" stroke="#fff" strokeWidth="1.300" /></svg>
      </button>
      <button type="button" aria-label="Network" className="flex w-[26px] justify-center">
        <svg width="14" height="14" viewBox="0 0 14 14" fill="none" stroke="#ddd" strokeWidth="1.200">
          <path d="M1 11Q3 2 13 2M4 12Q5 5 13 5M7 13q0-5 6-5M10 13.500q0-2 3-2.500" />
        </svg>
      </button>
      <div className="w-[60px] text-center text-xs leading-[18px] whitespace-nowrap">
        <div>10:20 AM</div>
        <div>3/9/2017</div>
      </div>
      <button type="button" aria-label="Notifications" className="relative flex w-[50px] justify-center">
        <svg width="26" height="26" viewBox="0 0 26 26" fill="none">
          <path d="M1 3h16v12h-8l-4 4v-4H1z" fill="#fff" />
          <path d="M4 6.500h10M4 9h10M4 11.500h6" stroke="#05080c" />
          <circle cx="16" cy="17" r="7.500" fill="#3a3d42" stroke="#8a8d92" />
          <text x="16" y="21" fontSize="11" fill="#fff" textAnchor="middle" fontFamily="Open Sans, sans-serif">2</text>
        </svg>
      </button>
      <span className="h-full w-[5px] border-l border-[#555]" />
    </div>
  </footer>
);

export default function App() {
  return (
    <div className="relative flex h-screen flex-col overflow-hidden bg-[#f0f0f0] font-['Roboto',sans-serif]">
      <header className="flex h-[23px] shrink-0 items-center bg-white pl-[3px] text-xs text-[#8a8a8a]">
        <BoardIcon />
        <h1 className="ml-[6px] flex-1">2 Board - C:\Users\Julie Elaine\Documents\eagle\WSPR\TRACKER.brd - EAGLE 8.0.2 free</h1>
        <button type="button" aria-label="Minimize" className="flex w-11 justify-center">
          <svg width="11" height="11" viewBox="0 0 11 11"><path d="M0 5.500h10" stroke="#888" /></svg>
        </button>
        <button type="button" aria-label="Restore" className="flex w-[46px] justify-center">
          <svg width="11" height="11" viewBox="0 0 11 11" fill="none" stroke="#888"><path d="M.5 2.500h8v8h-8zM2.500 2.500v-2h8v8h-2" /></svg>
        </button>
        <button type="button" aria-label="Close" className="flex w-[46px] justify-center">
          <svg width="11" height="11" viewBox="0 0 11 11" stroke="#888"><path d="M.5.5l10 10M10.500.5l-10 10" /></svg>
        </button>
      </header>
      <nav aria-label="Menu" className="flex h-[21px] shrink-0 items-center gap-4 bg-white pl-2 text-xs text-[#8a8a8a]">
        {menus.map((m) => (
          <button key={m} type="button">{m}</button>
        ))}
      </nav>
      <Toolbar />
      <div className="flex h-[25px] shrink-0 items-center border-b border-[#8c8c8c] bg-[#f0f0f0]">
        <Grip />
        <button type="button" aria-label="Grid" className="flex w-6 justify-center">
          <svg width="16" height="16" viewBox="0 0 16 16" fill="none" className="overflow-visible">
            <path d="M1 1h14v14H1zM1 5.700h14M1 10.300h14M5.700 1v14M10.300 1v14" stroke="#333" strokeWidth="1.500" />
            <path d="M12 9h9l-4.500 5z" fill="#000" />
          </svg>
        </button>
      </div>
      <div className="flex min-h-0 flex-1">
        <Palette />
        <main className="flex min-w-0 flex-1 flex-col">
          <div className="flex h-5 shrink-0 border-b border-[#707070] font-['Open_Sans',sans-serif] text-[11px] leading-[19px] text-black">
            <output className="w-[119px] border border-[#8c8c8c] border-r-[#c0c0c0] pl-1">0.05 inch (0.12 0.04)</output>
            <span className="ml-[2px] w-[13px] border border-[#8c8c8c]" />
            <span className="relative ml-px flex-1">
              <input aria-label="Command" type="text" className="block h-full w-full border border-[#8c8c8c] border-b-0 bg-white" />
              <span className="absolute top-[6px] right-1"><Chevron /></span>
            </span>
          </div>
          <div className="flex min-h-0 flex-1">
            <div className="min-w-0 flex-1 overflow-hidden"><Board /></div>
            <div className="flex w-[17px] flex-col items-center justify-between py-[6px]">
              <Chevron up />
              <span className="mt-auto mb-[26px] h-[66px] w-full bg-[#cdcdcd]" />
              <Chevron />
            </div>
          </div>
          <div className="flex h-[15px] shrink-0"><span className="w-[66%] bg-[#cdcdcd]" /></div>
        </main>
      </div>
      <div className="flex h-[30px] shrink-0 items-end justify-end border-t border-[#c8c8c8] bg-[#f0f0f0]">
        <svg width="60" height="20" viewBox="0 0 60 20" fill="none">
          <path d="M8 16l3-4M24 14l4-2M38 16l3-4" stroke="#555" strokeWidth="1.500" />
          <path d="M50 2l6 10" stroke="#2a7ac2" strokeWidth="3" />
          <circle cx="57" cy="13" r="2" fill="#2f9a3c" />
        </svg>
      </div>
      <Taskbar />
      <AutorouterDialog />
      <DrcDialog />
    </div>
  );
}
